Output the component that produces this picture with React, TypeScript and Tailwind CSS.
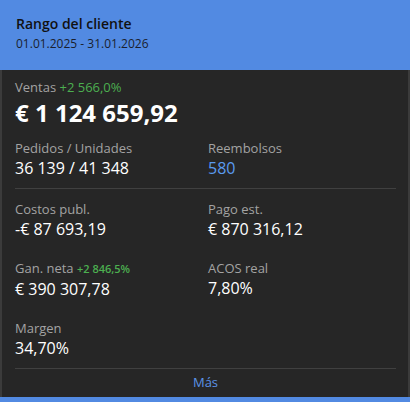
import React from "react";

const Label = ({ children }: { children: React.ReactNode }) => (
  <div className="text-[13px] leading-[18px] text-[#a3a3a3]">{children}</div>
);

const Value = ({ children, className = "" }: { children: React.ReactNode; className?: string }) => (
  <div className={`text-[16px] leading-[22px] font-medium ${className || "text-white"}`}>{children}</div>
);

export default function App() {
  return (
    <div
      className="w-[410px] h-[402px] flex flex-col bg-[#262626]"
      style={{ fontFamily: '"Open Sans", "Noto Sans", sans-serif' }}
    >
      <div className="h-[70px] bg-[#528ae2] pl-4 pt-[14px] text-[#111]">
        <div className="text-[14px] leading-[19px] font-semibold">Rango del cliente</div>
        <div className="text-[12px] leading-[18px] mt-[2px] font-medium text-[#1a1f2e]">01.01.2025 - 31.01.2026</div>
      </div>
      <div className="flex-1 flex flex-col border-l-2 border-r-2 border-[#3b3b3b] pl-[13px] pr-[12px] pt-[9px]">
        <div>
          <div className="text-[13px] leading-[16px] text-[#a3a3a3]">
            Ventas <span className="text-[#4caf50]">+2 566,0%</span>
          </div>
          <div className="text-[24px] leading-[35px] font-bold text-white">€ 1 124 659,92</div>
        </div>
        <div className="grid grid-cols-[193px_1fr] mt-[9px]">
          <div>
            <Label>Pedidos / Unidades</Label>
            <Value>36 139 / 41 348</Value>
          </div>
          <div>
            <Label>Reembolsos</Label>
            <Value className="text-[#5a9bf0]">580</Value>
          </div>
        </div>
        <div className="h-px bg-[#404040] mt-[9px]" />
        <div className="grid grid-cols-[193px_1fr] mt-[11px] gap-y-[19px]">
          <div>
            <Label>Costos publ.</Label>
            <Value>-€ 87 693,19</Value>
          </div>
          <div>
            <Label>Pago est.</Label>
            <Value>€ 870 316,12</Value>
          </div>
          <div>
            <Label>
              Gan. neta <span className="text-[11px] font-semibold text-[#4caf50]">+2 846,5%</span>
            </Label>
            <Value>€ 390 307,78</Value>
          </div>
          <div>
            <Label>ACOS real</Label>
            <Value>7,80%</Value>
          </div>
          <div>
            <Label>Margen</Label>
            <Value>34,70%</Value>
          </div>
        </div>
        <div className="h-px bg-[#404040] mt-[9px]" />
        <div className="flex-1 flex items-center justify-center text-[13px] text-[#5b93e6] font-medium">Más</div>
      </div>
      <div className="h-[5px] bg-[#528ae2]" />
    </div>
  );
}
